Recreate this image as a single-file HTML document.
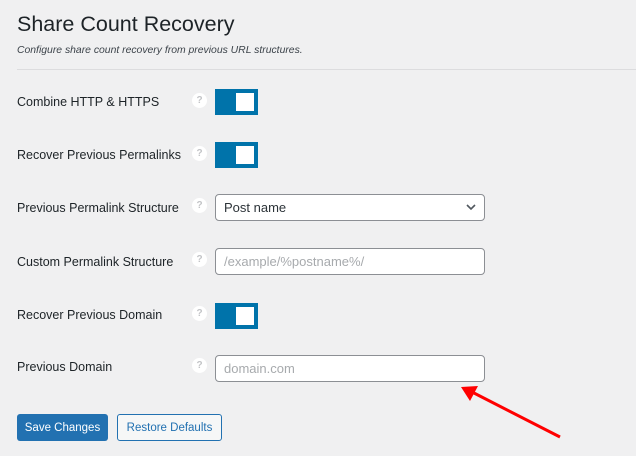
<!DOCTYPE html><html><head><style>
body{margin:0;width:636px;height:456px;background:#f0f0f1;font-family:"Liberation Sans",sans-serif;color:#1d2327;position:relative;overflow:hidden}
.a{position:absolute}
h1{position:absolute;left:17px;top:12px;margin:0;font-size:21.5px;font-weight:normal;color:#1d2327}
.lbl{position:absolute;left:17px;font-size:12.5px}
.q{position:absolute;left:192px;width:15px;height:15px;border-radius:50%;background:#fff;color:#c3c4c7;font-size:10px;text-align:center;line-height:15px;font-weight:bold}
.tg{position:absolute;left:215px;width:43px;height:26px;background:#0073aa}
.tg i{position:absolute;left:21px;top:4px;width:18px;height:18px;background:#fff}
.in{position:absolute;left:215px;height:25px;background:#fff;border:1px solid #8c8f94;border-radius:4px;font-size:13px;line-height:25px;padding-left:8px;width:260px}
</style></head><body>
<h1>Share Count Recovery</h1>
<div class="a" style="left:17px;top:45px;font-size:10.4px;font-style:italic;color:#3c434a">Configure share count recovery from previous URL structures.</div>
<div class="a" style="left:17px;top:69px;width:619px;height:1px;background:#dcdcde"></div>
<div class="lbl" style="top:95px">Combine HTTP &amp; HTTPS</div><div class="q" style="top:93px">?</div><div class="tg" style="top:89px"><i></i></div>
<div class="lbl" style="top:148px">Recover Previous Permalinks</div><div class="q" style="top:146px">?</div><div class="tg" style="top:142px"><i></i></div>
<div class="lbl" style="top:201px">Previous Permalink Structure</div><div class="q" style="top:198px">?</div><div class="in" style="top:194px;color:#2c3338">Post name<svg style="position:absolute;right:8px;top:9px" width="10" height="7" viewBox="0 0 10 7"><path d="M1 1l4 4 4-4" fill="none" stroke="#50575e" stroke-width="1.6"/></svg></div>
<div class="lbl" style="top:255px">Custom Permalink Structure</div><div class="q" style="top:252px">?</div><div class="in" style="top:248px;color:#a7aaad">/example/%postname%/</div>
<div class="lbl" style="top:308px">Recover Previous Domain</div><div class="q" style="top:306px">?</div><div class="tg" style="top:303px"><i></i></div>
<div class="lbl" style="top:360px">Previous Domain</div><div class="q" style="top:358px">?</div><div class="in" style="top:355px;color:#a7aaad">domain.com</div>
<div class="a" style="left:17px;top:414px;width:91px;height:27px;background:#2271b1;border-radius:3px;color:#fff;font-size:11.5px;line-height:28px;text-align:center">Save Changes</div>
<div class="a" style="left:117px;top:414px;width:103px;height:25px;border:1px solid #2271b1;background:#f6f7f7;border-radius:3px;color:#2271b1;font-size:11.5px;line-height:26px;text-align:center">Restore Defaults</div>
<svg class="a" style="left:0;top:0" width="636" height="456"><line x1="560" y1="437" x2="472" y2="392" stroke="#f00" stroke-width="3"/><polygon points="461,387 478,386 470,401" fill="#f00"/></svg>
</body></html>
